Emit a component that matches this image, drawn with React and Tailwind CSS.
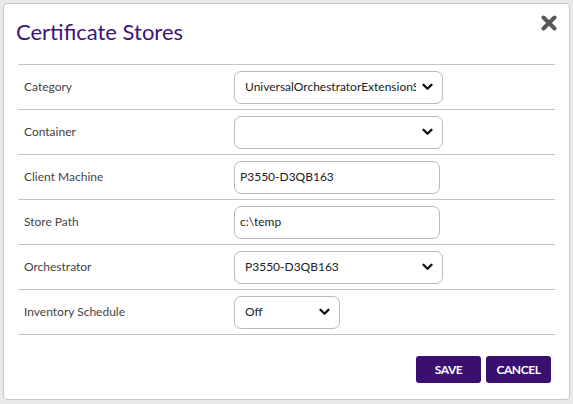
import React from 'react';

const font = { fontFamily: 'Lato, "Open Sans", Arial, sans-serif' };

const Chevron = () => (
  <svg width="11" height="8" viewBox="0 0 11 8" className="shrink-0">
    <path d="M1.5 1.8 L5.5 5.8 L9.5 1.8" fill="none" stroke="#111" strokeWidth="2.3" strokeLinecap="round" strokeLinejoin="round" />
  </svg>
);

const SelectBox = ({ value, width }) => (
  <div className={`${width} h-[33px] border border-[#b9b9b9] rounded-[7px] bg-white flex items-center justify-between pl-[10px] pr-[9px]`}>
    <span className="text-[12px] text-[#222] whitespace-nowrap overflow-hidden max-w-[174px] mr-[6px]">{value}</span>
    <Chevron />
  </div>
);

const InputBox = ({ value }) => (
  <div className="w-[206px] h-[33px] border border-[#b9b9b9] rounded-[7px] bg-white flex items-center pl-[5px]">
    <span className="text-[12px] text-[#222]">{value}</span>
  </div>
);

const rows = [
  { label: 'Category', field: <SelectBox value="UniversalOrchestratorExtensionS" width="w-[209px]" /> },
  { label: 'Container', field: <SelectBox value="" width="w-[209px]" /> },
  { label: 'Client Machine', field: <InputBox value="P3550-D3QB163" /> },
  { label: 'Store Path', field: <InputBox value="c:\temp" /> },
  { label: 'Orchestrator', field: <SelectBox value="P3550-D3QB163" width="w-[209px]" /> },
  { label: 'Inventory Schedule', field: <SelectBox value="Off" width="w-[106px]" /> },
];

export default function App() {
  return (
    <div className="w-[573px] h-[404px] bg-[#e9e9e9] pt-[3px] pl-[3px] overflow-hidden" style={font}>
      <div className="w-[567px] h-[397px] bg-white border border-[#c8c8c8] rounded-[4px] px-[14px] flex flex-col">
        <div className="flex items-start justify-between h-[60px]">
          <h2 className="text-[22px] leading-[28px] text-[#3d1578] mt-[14px] -ml-[2px]">Certificate Stores</h2>
          <svg width="16" height="16" viewBox="0 0 16 16" className="mt-[11px] mr-[-2px]">
            <path d="M2.5 2.5 L13.5 13.5 M13.5 2.5 L2.5 13.5" stroke="#575757" strokeWidth="4" strokeLinecap="round" />
          </svg>
        </div>
        <div className="border-t border-[#c4c4c4]">
          {rows.map((r) => (
            <div key={r.label} className="h-[45px] border-b border-[#c4c4c4] flex items-center">
              <div className="w-[216px] pl-[6px] text-[12px] text-[#444]">{r.label}</div>
              {r.field}
            </div>
          ))}
        </div>
        <div className="flex justify-end gap-[5px] mt-[21px] pr-[4px]">
          <button className="w-[65px] h-[27px] bg-[#3a0f70] text-white text-[12px] font-bold rounded-[3px] tracking-[-0.4px]">SAVE</button>
          <button className="w-[65px] h-[27px] bg-[#3a0f70] text-white text-[12px] font-bold rounded-[3px] tracking-[-0.4px]">CANCEL</button>
        </div>
      </div>
    </div>
  );
}
